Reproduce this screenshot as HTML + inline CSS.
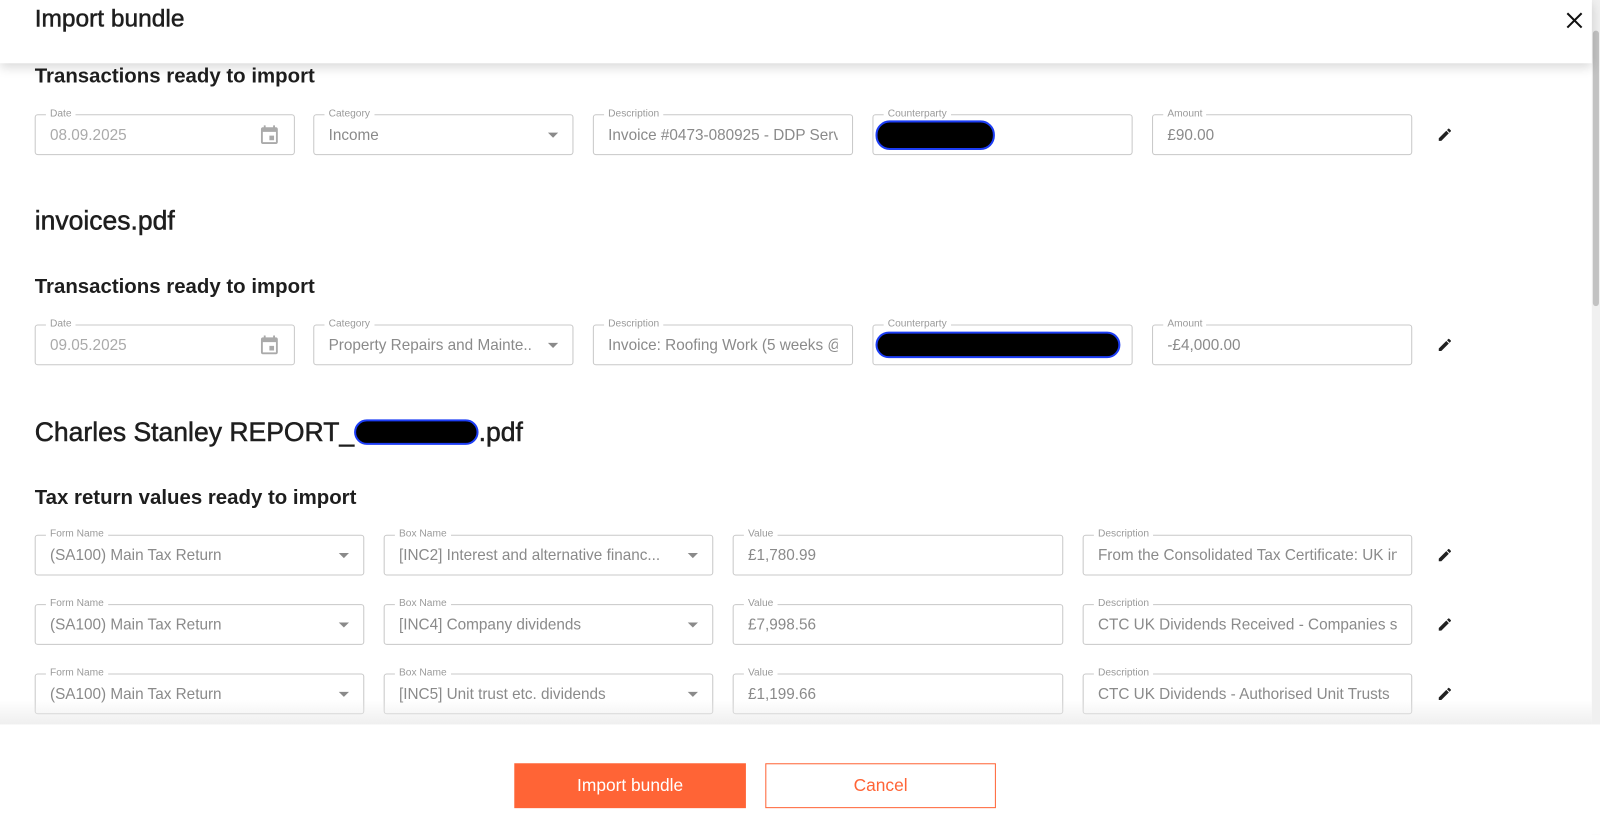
<!DOCTYPE html>
<html><head><meta charset="utf-8"><style>
*{box-sizing:border-box;margin:0;padding:0}
html,body{width:1600px;height:818px;overflow:hidden;background:#fff}
body{font-family:"Liberation Sans",sans-serif;color:#222}
#w{position:absolute;left:0;top:0;width:1568px;height:802px;transform:scale(1.0204);transform-origin:0 0}
.a{position:absolute}
.h{position:absolute;left:34px;font-weight:bold;color:#1e1e1e;white-space:nowrap}
.f{position:absolute;height:40px;border:1px solid #c8c8c8;border-radius:3px;background:#fff}
.f label{position:absolute;top:-7px;left:10px;background:#fff;padding:0 4px;font-size:10px;color:#9a9a9a;line-height:12px}
.f span{position:absolute;left:14px;top:11px;font-size:15px;color:#8a8a8a;white-space:nowrap;overflow:hidden;right:14px}
.f.s span{right:40px}
.f.s:after{content:"";position:absolute;right:14px;top:17px;border-left:5px solid transparent;border-right:5px solid transparent;border-top:5px solid #8a8a8a}
.red{position:absolute;background:#000;border:2px solid #1c3df5;border-radius:14px}
.pen{position:absolute;width:16px;height:16px}
</style></head><body><div id="w">
<div class="a" style="left:0;top:0;width:1560px;height:62px;background:#fff;box-shadow:0 4px 10px rgba(0,0,0,.15);z-index:2"></div>
<div class="h" style="top:5px;font-size:24px;font-weight:normal;-webkit-text-stroke:.5px #1e1e1e;z-index:3">Import bundle</div>
<svg class="a" style="left:1535px;top:12px;z-index:3" width="16" height="16" viewBox="0 0 16 16"><path d="M1 1L15 15M15 1L1 15" stroke="#111" stroke-width="2"/></svg>
<div class="a" style="left:1560px;top:0;width:8px;height:818px;background:#f0f0f0"></div>
<div class="a" style="left:1561px;top:30px;width:6px;height:270px;background:#c2c2c2;border-radius:3px"></div>

<div class="h" style="top:64px;font-size:20px">Transactions ready to import</div>
<div class="f" style="left:34px;top:112px;width:255px"><label>Date</label><span style="color:#aaa">08.09.2025</span>
<svg class="a" style="right:13px;top:8px" width="22" height="22" viewBox="0 0 24 24"><path fill="#aaa" d="M19 4h-1V2h-2v2H8V2H6v2H5C3.9 4 3 4.9 3 6v14c0 1.1.9 2 2 2h14c1.1 0 2-.9 2-2V6c0-1.1-.9-2-2-2zm0 16H5V9h14v11zm-7-7h5v5h-5z"/></svg></div>
<div class="f s" style="left:307px;top:112px;width:255px"><label>Category</label><span>Income</span></div>
<div class="f" style="left:581px;top:112px;width:255px"><label>Description</label><span>Invoice #0473-080925 - DDP Services</span></div>
<div class="f" style="left:855px;top:112px;width:255px"><label>Counterparty</label></div>
<div class="red" style="left:858px;top:118px;width:117px;height:29px"></div>
<div class="f" style="left:1129px;top:112px;width:255px"><label>Amount</label><span>£90.00</span></div>
<svg class="pen" style="left:1408px;top:124px" viewBox="0 0 24 24"><path fill="#222" d="M3 17.25V21h3.75L17.81 9.94l-3.75-3.75L3 17.25zM20.71 7.04a1 1 0 000-1.41l-2.34-2.34a1 1 0 00-1.41 0l-1.83 1.83 3.75 3.75 1.83-1.83z"/></svg>

<div class="h" style="top:201px;font-size:26px;font-weight:normal;-webkit-text-stroke:.5px #1e1e1e">invoices.pdf</div>
<div class="h" style="top:270px;font-size:20px">Transactions ready to import</div>
<div class="f" style="left:34px;top:318px;width:255px"><label>Date</label><span style="color:#aaa">09.05.2025</span>
<svg class="a" style="right:13px;top:8px" width="22" height="22" viewBox="0 0 24 24"><path fill="#aaa" d="M19 4h-1V2h-2v2H8V2H6v2H5C3.9 4 3 4.9 3 6v14c0 1.1.9 2 2 2h14c1.1 0 2-.9 2-2V6c0-1.1-.9-2-2-2zm0 16H5V9h14v11zm-7-7h5v5h-5z"/></svg></div>
<div class="f s" style="left:307px;top:318px;width:255px"><label>Category</label><span>Property Repairs and Mainte...</span></div>
<div class="f" style="left:581px;top:318px;width:255px"><label>Description</label><span>Invoice: Roofing Work (5 weeks @ x)</span></div>
<div class="f" style="left:855px;top:318px;width:255px"><label>Counterparty</label></div>
<div class="red" style="left:858px;top:325px;width:240px;height:26px"></div>
<div class="f" style="left:1129px;top:318px;width:255px"><label>Amount</label><span>-£4,000.00</span></div>
<svg class="pen" style="left:1408px;top:330px" viewBox="0 0 24 24"><path fill="#222" d="M3 17.25V21h3.75L17.81 9.94l-3.75-3.75L3 17.25zM20.71 7.04a1 1 0 000-1.41l-2.34-2.34a1 1 0 00-1.41 0l-1.83 1.83 3.75 3.75 1.83-1.83z"/></svg>

<div class="h" style="top:408px;font-size:26px;font-weight:normal;-webkit-text-stroke:.5px #1e1e1e">Charles Stanley REPORT_<span style="display:inline-block;vertical-align:middle;width:122px;height:25px;background:#000;border:2px solid #1c3df5;border-radius:14px;margin-top:-4px"></span>.pdf</div>
<div class="h" style="top:477px;font-size:20px">Tax return values ready to import</div>

<div class="f s" style="left:34px;top:524px;width:323px"><label>Form Name</label><span>(SA100) Main Tax Return</span></div>
<div class="f s" style="left:376px;top:524px;width:323px"><label>Box Name</label><span>[INC2] Interest and alternative financ...</span></div>
<div class="f" style="left:718px;top:524px;width:324px"><label>Value</label><span>£1,780.99</span></div>
<div class="f" style="left:1061px;top:524px;width:323px"><label>Description</label><span>From the Consolidated Tax Certificate: UK interest</span></div>
<svg class="pen" style="left:1408px;top:536px" viewBox="0 0 24 24"><path fill="#222" d="M3 17.25V21h3.75L17.81 9.94l-3.75-3.75L3 17.25zM20.71 7.04a1 1 0 000-1.41l-2.34-2.34a1 1 0 00-1.41 0l-1.83 1.83 3.75 3.75 1.83-1.83z"/></svg>

<div class="f s" style="left:34px;top:592px;width:323px"><label>Form Name</label><span>(SA100) Main Tax Return</span></div>
<div class="f s" style="left:376px;top:592px;width:323px"><label>Box Name</label><span>[INC4] Company dividends</span></div>
<div class="f" style="left:718px;top:592px;width:324px"><label>Value</label><span>£7,998.56</span></div>
<div class="f" style="left:1061px;top:592px;width:323px"><label>Description</label><span>CTC UK Dividends Received - Companies shares</span></div>
<svg class="pen" style="left:1408px;top:604px" viewBox="0 0 24 24"><path fill="#222" d="M3 17.25V21h3.75L17.81 9.94l-3.75-3.75L3 17.25zM20.71 7.04a1 1 0 000-1.41l-2.34-2.34a1 1 0 00-1.41 0l-1.83 1.83 3.75 3.75 1.83-1.83z"/></svg>

<div class="f s" style="left:34px;top:660px;width:323px"><label>Form Name</label><span>(SA100) Main Tax Return</span></div>
<div class="f s" style="left:376px;top:660px;width:323px"><label>Box Name</label><span>[INC5] Unit trust etc. dividends</span></div>
<div class="f" style="left:718px;top:660px;width:324px"><label>Value</label><span>£1,199.66</span></div>
<div class="f" style="left:1061px;top:660px;width:323px"><label>Description</label><span>CTC UK Dividends - Authorised Unit Trusts</span></div>
<svg class="pen" style="left:1408px;top:672px" viewBox="0 0 24 24"><path fill="#222" d="M3 17.25V21h3.75L17.81 9.94l-3.75-3.75L3 17.25zM20.71 7.04a1 1 0 000-1.41l-2.34-2.34a1 1 0 00-1.41 0l-1.83 1.83 3.75 3.75 1.83-1.83z"/></svg>

<div class="a" style="left:0;top:686px;width:1560px;height:24px;background:linear-gradient(rgba(240,240,240,0),rgba(235,235,235,.8))"></div>
<div class="a" style="left:0;top:710px;width:1600px;height:108px;background:#fff"></div>
<div class="a" style="left:504px;top:748px;width:227px;height:44px;background:#ff6436;color:#fff;font-size:17px;text-align:center;line-height:44px">Import bundle</div>
<div class="a" style="left:750px;top:748px;width:226px;height:44px;border:1px solid #ff6436;color:#ff6436;font-size:17px;text-align:center;line-height:42px">Cancel</div>
</div></body></html>
